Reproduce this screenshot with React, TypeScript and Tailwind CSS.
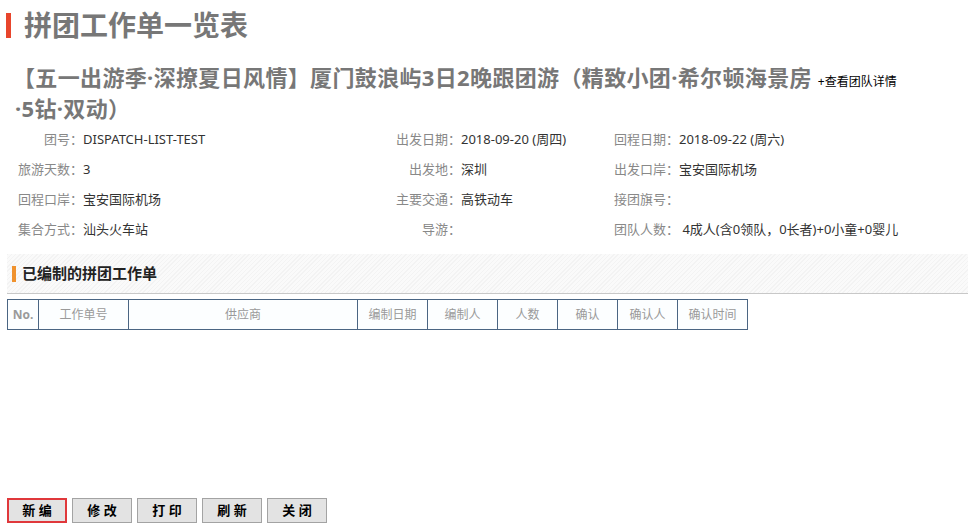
import React from "react";

const font = { fontFamily: '"Noto Sans", "Noto Sans CJK SC", sans-serif' };

const rows: [string, string, string, string, string, string][] = [
  ["团号：", "DISPATCH-LIST-TEST", "出发日期：", "2018-09-20 (周四)", "回程日期：", "2018-09-22 (周六)"],
  ["旅游天数：", "3", "出发地：", "深圳", "出发口岸：", "宝安国际机场"],
  ["回程口岸：", "宝安国际机场", "主要交通：", "高铁动车", "接团旗号：", ""],
  ["集合方式：", "汕头火车站", "导游：", "", "团队人数：", " 4成人(含0领队，0长者)+0小童+0婴儿"],
];

const cols: [string, number][] = [
  ["No.", 31],
  ["工作单号", 90],
  ["供应商", 229],
  ["编制日期", 70],
  ["编制人", 70],
  ["人数", 60],
  ["确认", 60],
  ["确认人", 60],
  ["确认时间", 69],
];

const buttons = ["新 编", "修 改", "打 印", "刷 新", "关 闭"];

export default function App() {
  return (
    <div className="w-[972px] h-[529px] bg-white overflow-hidden" style={font}>
      <div className="flex items-center pt-[9px] pl-[6px]">
        <div className="w-[5px] h-[25px] bg-[#e8452c]" />
        <div className="ml-[13px] text-[28px] leading-[33px] font-bold text-[#777777]">拼团工作单一览表</div>
      </div>

      <div className="mt-[22px] pl-[13px] pr-[60px] text-[22px] leading-[27px] font-bold text-[#777777] tracking-[0.35px]">
        【五一出游季·深撩夏日风情】厦门鼓浪屿3日2晚跟团游（精致小团·希尔顿海景房
        <span className="ml-[6px] text-[12px] font-normal text-black tracking-normal">+查看团队详情</span>
        <br />
        <span className="ml-[2px]">·5钻·双动）</span>
      </div>

      <div className="mt-[2px] grid grid-cols-[83px_313px_65px_153px_65px_1fr] text-[13px] leading-[30px]">
        {rows.map((r, i) => (
          <React.Fragment key={i}>
            <div className="text-right text-[#888888] whitespace-nowrap">{r[0]}</div>
            <div className="text-[#333333] whitespace-nowrap">{r[1]}</div>
            <div className="text-right text-[#888888] whitespace-nowrap">{r[2]}</div>
            <div className="text-[#333333] whitespace-nowrap">{r[3]}</div>
            <div className="text-right text-[#888888] whitespace-nowrap">{r[4]}</div>
            <div className="text-[#333333] whitespace-pre">{r[5]}</div>
          </React.Fragment>
        ))}
      </div>

      <div className="mt-[10px] ml-[7px] w-[961px] h-[40px] flex items-center border-b border-[#c8c8c8] bg-[repeating-linear-gradient(135deg,#f3f3f3_0px,#f3f3f3_1px,#fafafa_1px,#fafafa_3px)]">
        <div className="ml-[5px] w-[4px] h-[16px] bg-[#f0922e]" />
        <div className="ml-[6px] text-[15px] font-bold text-[#222222]">已编制的拼团工作单</div>
      </div>

      <div className="mt-[5px] ml-[7px] flex w-fit border border-[#4a6583] bg-[#fcfeff]">
        {cols.map(([label, w], i) => (
          <div
            key={label}
            style={{ width: w }}
            className={`h-[29px] flex items-center justify-center text-[12px] text-[#9a9a9a] ${i === 0 ? "font-bold" : ""} ${i < cols.length - 1 ? "border-r border-[#4a6583]" : ""}`}
          >
            {label}
          </div>
        ))}
      </div>

      <div className="mt-[168px] ml-[7px] flex gap-[5px]">
        {buttons.map((b, i) => (
          <button
            key={b}
            className={`w-[60px] h-[25px] flex items-center justify-center text-[13px] font-bold text-black bg-[#e3e3e3] ${i === 0 ? "border-2 border-[#e0383b]" : "border border-[#a3a3a3]"}`}
          >
            <span className="whitespace-pre">{b}</span>
          </button>
        ))}
      </div>
    </div>
  );
}
